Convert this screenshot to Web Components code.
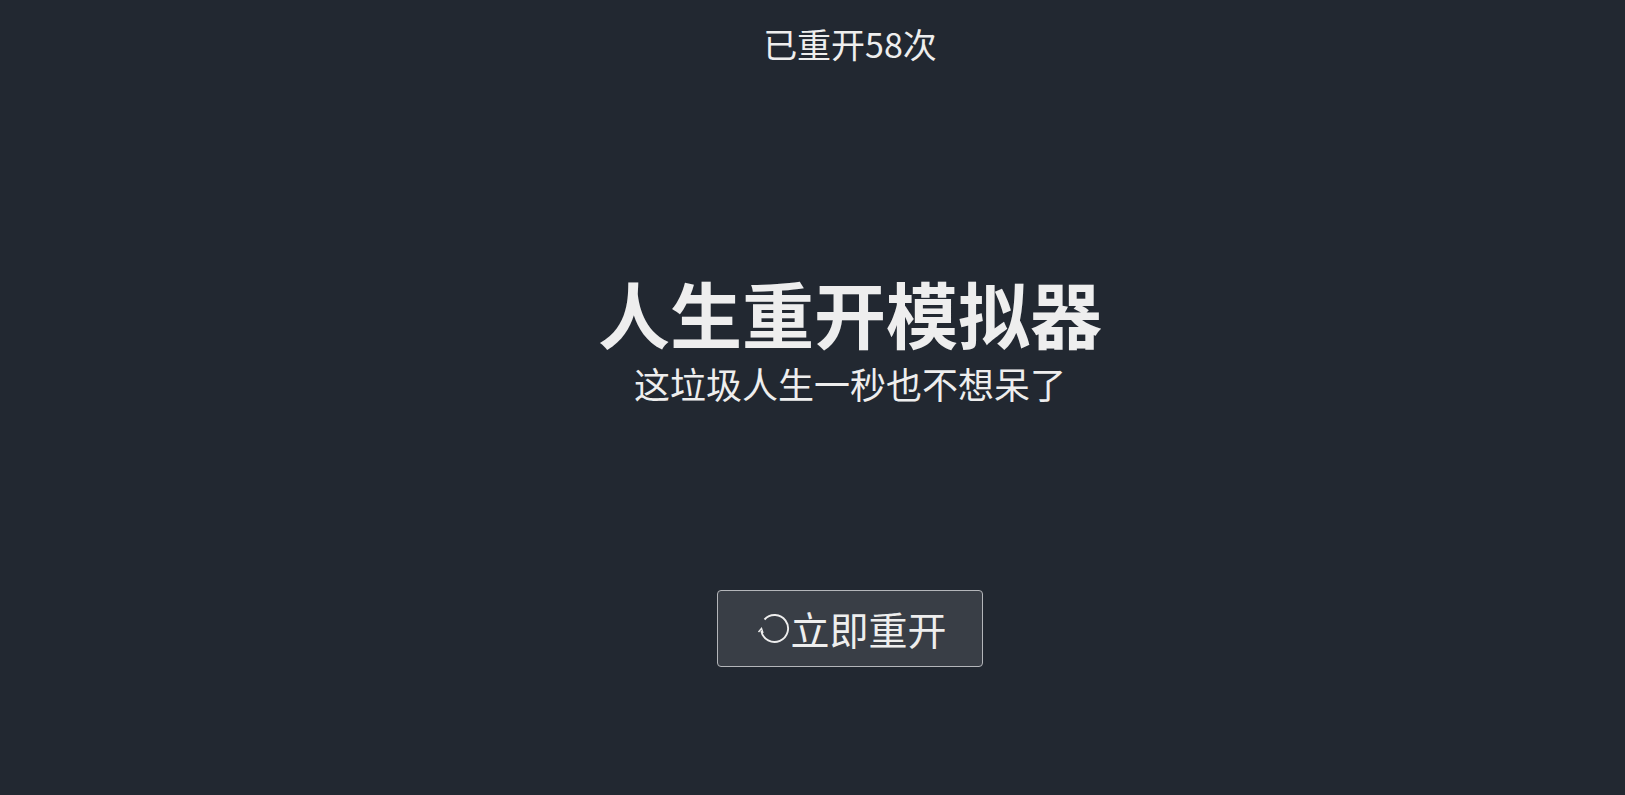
<!DOCTYPE html>
<html lang="zh">
<head>
<meta charset="utf-8">
<title>人生重开模拟器</title>
<style>
  html, body { margin: 0; height: 100%; background: #222831; overflow: hidden; }
</style>
</head>
<body>
<life-home>
  <span slot="count">已重开58次</span>
  <span slot="title">人生重开模拟器</span>
  <span slot="subtitle">这垃圾人生一秒也不想呆了</span>
  <restart-button>立即重开</restart-button>
</life-home>
<script>
class LifeHome extends HTMLElement {
  constructor() {
    super();
    this.attachShadow({ mode: "open" });
    this.shadowRoot.innerHTML = `
      <style>
        :host {
          display: flex;
          flex-direction: column;
          align-items: center;
          height: 795px;
          box-sizing: border-box;
          padding: 19px 0 0 75px;
          color: #eeeeee;
          font-family: "Noto Sans CJK SC", "Noto Sans", sans-serif;
        }
        .count { font-size: 34px; line-height: 50px; }
        .title { margin-top: 207px; font-size: 72px; line-height: 72px; font-weight: 700; }
        .subtitle { margin-top: 12px; font-size: 36px; line-height: 46px; }
        .action { margin-top: 184px; }
      </style>
      <div class="count"><slot name="count"></slot></div>
      <div class="title"><slot name="title"></slot></div>
      <div class="subtitle"><slot name="subtitle"></slot></div>
      <div class="action"><slot></slot></div>
    `;
  }
}

class RestartButton extends HTMLElement {
  constructor() {
    super();
    this.attachShadow({ mode: "open" });
    this.shadowRoot.innerHTML = `
      <style>
        :host { display: block; }
        button {
          display: flex;
          align-items: center;
          justify-content: center;
          box-sizing: border-box;
          width: 266px;
          height: 77px;
          padding: 0 0 0 4px;
          background: #393e46;
          border: 1px solid #b4b6ba;
          border-radius: 4px;
          color: #eeeeee;
          font: 39px/1 "Noto Sans CJK SC", "Noto Sans", sans-serif;
          cursor: pointer;
        }
        svg { width: 33px; height: 33px; flex: none; }
      </style>
      <button>
        <svg viewBox="0 0 33 33" fill="none" stroke="#eeeeee" stroke-width="1.9">
          <path d="M7.5 7.5A13.5 13.5 0 1 1 4.3 19"/>
          <path d="M1.5 20l3-3.5 1.5 4.5" stroke-width="1.4"/>
        </svg>
        <slot></slot>
      </button>
    `;
  }
}

customElements.define("life-home", LifeHome);
customElements.define("restart-button", RestartButton);
</script>
</body>
</html>
